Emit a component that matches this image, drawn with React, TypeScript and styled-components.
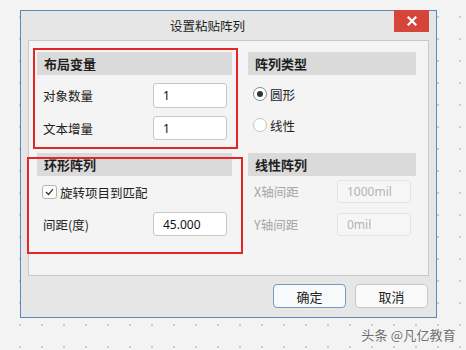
import React from "react";
import styled, { createGlobalStyle } from "styled-components";

const Global = createGlobalStyle`
  html, body { margin: 0; padding: 0; }
  body { font-family: "Noto Sans CJK SC", "Noto Sans", sans-serif; }
`;

const Page = styled.div`
  width: 466px;
  height: 350px;
  box-sizing: border-box;
  padding: 10px 0 0 20px;
  background-color: #f3f3f3;
  background-image: radial-gradient(circle, #cdcdcd 0.7px, transparent 1.1px);
  background-size: 22px 22px;
  background-position: 9px 6px;
  position: relative;
  overflow: hidden;
`;

const Dialog = styled.div`
  width: 417px;
  height: 308px;
  box-sizing: border-box;
  border: 1px solid #5b87b9;
  background: #e6e6e6;
  display: flex;
  flex-direction: column;
`;

const TitleBar = styled.div`
  height: 29px;
  display: flex;
  align-items: flex-start;
  flex: none;
`;

const Title = styled.div`
  flex: 1;
  text-align: center;
  font-size: 12.5px;
  line-height: 29px;
  color: #222;
`;

const CloseButton = styled.div`
  width: 35px;
  height: 22px;
  margin-top: -1px;
  margin-right: 7px;
  background: #d64539;
  display: flex;
  align-items: center;
  justify-content: center;
`;

const Panel = styled.div`
  margin: 0 7px 0 7px;
  height: 236px;
  box-sizing: border-box;
  border: 1px solid #c9c9c9;
  background: #f4f4f4;
  padding: 11px 0 0 8px;
  display: grid;
  grid-template-columns: 195px 168px;
  grid-template-rows: 101px 1fr;
  column-gap: 16px;
  position: relative;
  flex: none;
`;

const Section = styled.div`
  display: flex;
  flex-direction: column;
`;

const SectionHeader = styled.div`
  height: 23px;
  background: #dadada;
  padding-left: 7px;
  font-size: 13px;
  font-weight: 700;
  line-height: 23px;
  color: #1e1e1e;
`;

const FieldRow = styled.div<{ $mt: number; $disabled?: boolean }>`
  margin-top: ${(p) => p.$mt}px;
  display: flex;
  align-items: center;
  justify-content: space-between;
  padding: 0 5px 0 6px;
  font-size: 12.5px;
  color: ${(p) => (p.$disabled ? "#a6a6a6" : "#222")};
`;

const Input = styled.div<{ $disabled?: boolean; $h?: number }>`
  width: 74px;
  height: ${(p) => p.$h ?? 25}px;
  box-sizing: border-box;
  border: 1px solid ${(p) => (p.$disabled ? "#e3e3e3" : "#c6c6c6")};
  border-radius: 3px;
  background: ${(p) => (p.$disabled ? "#f6f6f6" : "#ffffff")};
  padding-left: 9px;
  display: flex;
  align-items: center;
  font-family: "Noto Sans", "Noto Sans CJK SC", sans-serif;
  font-size: 12px;
  color: ${(p) => (p.$disabled ? "#b4b4b4" : "#111")};
`;

const CheckRow = styled.label`
  margin-top: 9px;
  padding-left: 5px;
  display: flex;
  align-items: center;
  gap: 3px;
  font-size: 12.5px;
  color: #222;
  height: 14px;
`;

const CheckBox = styled.span`
  width: 15px;
  height: 14px;
  box-sizing: border-box;
  border: 1px solid #b3b3b3;
  border-radius: 3px;
  background: #fff;
  display: inline-flex;
  align-items: center;
  justify-content: center;
`;

const RadioRow = styled.div<{ $mt: number }>`
  margin-top: ${(p) => p.$mt}px;
  padding-left: 5px;
  display: flex;
  align-items: center;
  gap: 3px;
  height: 14px;
  font-size: 12.5px;
  color: #222;
`;

const RadioCircle = styled.span<{ $checked?: boolean }>`
  width: 14px;
  height: 14px;
  box-sizing: border-box;
  border-radius: 50%;
  border: 1px solid ${(p) => (p.$checked ? "#7d8b9c" : "#c4c4c4")};
  background: #fff;
  display: inline-flex;
  align-items: center;
  justify-content: center;
  &::after {
    content: "";
    width: 6px;
    height: 6px;
    border-radius: 50%;
    background: ${(p) => (p.$checked ? "#333" : "transparent")};
  }
`;

const Footer = styled.div`
  display: flex;
  justify-content: flex-end;
  gap: 9px;
  padding: 8px 8px 0 0;
`;

const Button = styled.div<{ $primary?: boolean }>`
  width: 73px;
  height: 24px;
  box-sizing: border-box;
  border: 1px solid ${(p) => (p.$primary ? "#6f9bc6" : "#c8c8c8")};
  border-radius: 4px;
  background: ${(p) => (p.$primary ? "#f7f9fb" : "#fafafa")};
  display: flex;
  align-items: center;
  justify-content: center;
  font-size: 13px;
  color: #222;
`;

const RedBox = styled.div<{ $l: number; $t: number; $w: number; $h: number }>`
  position: absolute;
  left: ${(p) => p.$l}px;
  top: ${(p) => p.$t}px;
  width: ${(p) => p.$w}px;
  height: ${(p) => p.$h}px;
  box-sizing: border-box;
  border: 2px solid #e32626;
  pointer-events: none;
`;

const Watermark = styled.div`
  position: absolute;
  right: 10px;
  bottom: 6px;
  font-size: 13px;
  color: #6e6e6e;
  text-shadow: 0 0 2px #fff;
  letter-spacing: 0.2px;
`;

export default function App() {
  return (
    <>
      <Global />
      <Page>
        <Dialog>
          <TitleBar>
            <Title>设置粘贴阵列</Title>
            <CloseButton>
              <svg width="10" height="10" viewBox="0 0 10 10">
                <path d="M1.5 1.5 L8.5 8.5 M8.5 1.5 L1.5 8.5" stroke="#fff" strokeWidth="2.2" strokeLinecap="square" />
              </svg>
            </CloseButton>
          </TitleBar>
          <Panel>
            <Section>
              <SectionHeader>布局变量</SectionHeader>
              <FieldRow $mt={8}>
                对象数量
                <Input>1</Input>
              </FieldRow>
              <FieldRow $mt={8}>
                文本增量
                <Input $h={24}>1</Input>
              </FieldRow>
            </Section>
            <Section>
              <SectionHeader>阵列类型</SectionHeader>
              <RadioRow $mt={12}>
                <RadioCircle $checked />
                圆形
              </RadioRow>
              <RadioRow $mt={17}>
                <RadioCircle />
                线性
              </RadioRow>
            </Section>
            <Section>
              <SectionHeader>环形阵列</SectionHeader>
              <CheckRow>
                <CheckBox>
                  <svg width="9" height="8" viewBox="0 0 9 8">
                    <path d="M1 4 L3.5 6.5 L8 1.2" fill="none" stroke="#333" strokeWidth="1.2" />
                  </svg>
                </CheckBox>
                旋转项目到匹配
              </CheckRow>
              <FieldRow $mt={13}>
                间距(度)
                <Input $h={24}>45.000</Input>
              </FieldRow>
            </Section>
            <Section>
              <SectionHeader>线性阵列</SectionHeader>
              <FieldRow $mt={4} $disabled>
                X轴间距
                <Input $disabled $h={23}>1000mil</Input>
              </FieldRow>
              <FieldRow $mt={10} $disabled>
                Y轴间距
                <Input $disabled $h={23}>0mil</Input>
              </FieldRow>
            </Section>
            <RedBox $l={4} $t={7} $w={205} $h={101} />
            <RedBox $l={-2} $t={116} $w={216} $h={97} />
          </Panel>
          <Footer>
            <Button $primary>确定</Button>
            <Button>取消</Button>
          </Footer>
        </Dialog>
        <Watermark>头条 @凡亿教育</Watermark>
      </Page>
    </>
  );
}
